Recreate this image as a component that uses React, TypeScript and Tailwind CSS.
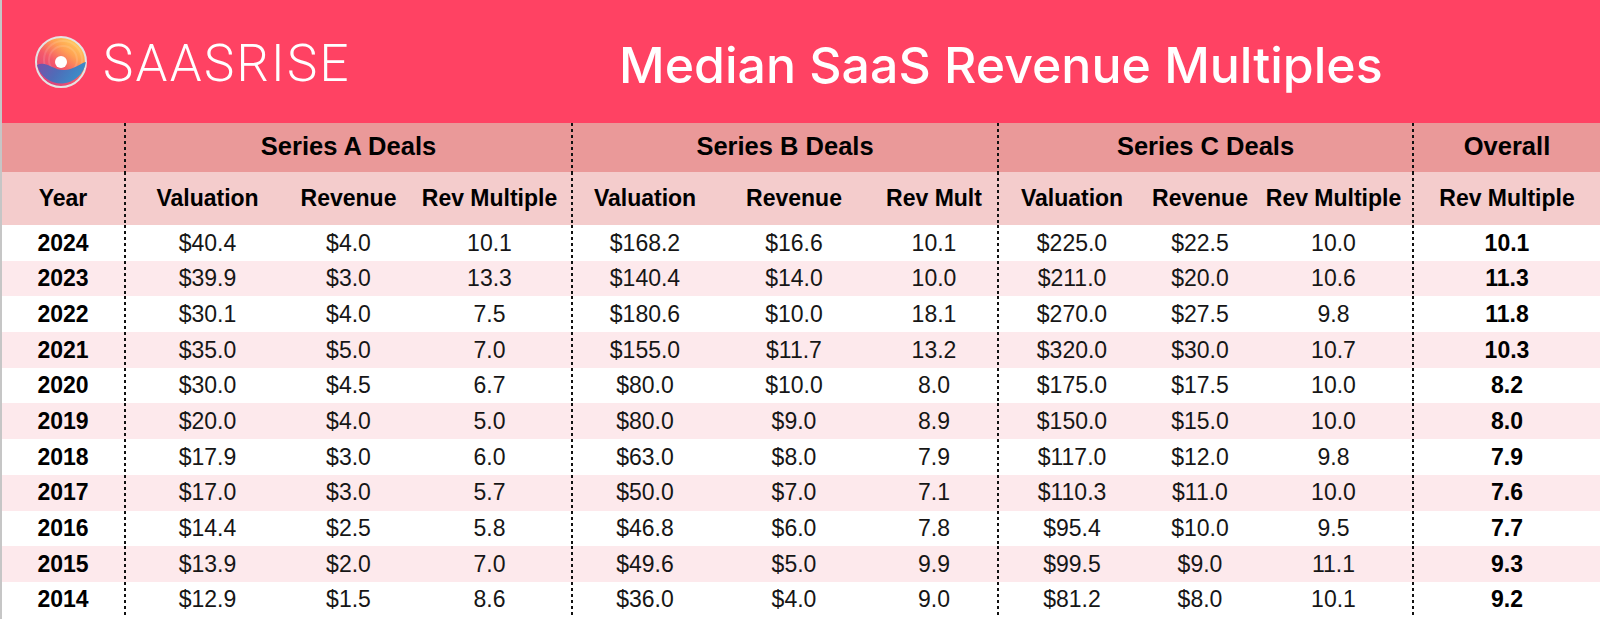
import React from "react"

const cols =
  "grid grid-cols-[122px_2px_163px_119px_163px_2px_144px_154px_126px_2px_146px_110px_157px_2px_1fr]"

const rows: [string, string[], string][] = [
  ["2024", ["$40.4", "$4.0", "10.1", "$168.2", "$16.6", "10.1", "$225.0", "$22.5", "10.0"], "10.1"],
  ["2023", ["$39.9", "$3.0", "13.3", "$140.4", "$14.0", "10.0", "$211.0", "$20.0", "10.6"], "11.3"],
  ["2022", ["$30.1", "$4.0", "7.5", "$180.6", "$10.0", "18.1", "$270.0", "$27.5", "9.8"], "11.8"],
  ["2021", ["$35.0", "$5.0", "7.0", "$155.0", "$11.7", "13.2", "$320.0", "$30.0", "10.7"], "10.3"],
  ["2020", ["$30.0", "$4.5", "6.7", "$80.0", "$10.0", "8.0", "$175.0", "$17.5", "10.0"], "8.2"],
  ["2019", ["$20.0", "$4.0", "5.0", "$80.0", "$9.0", "8.9", "$150.0", "$15.0", "10.0"], "8.0"],
  ["2018", ["$17.9", "$3.0", "6.0", "$63.0", "$8.0", "7.9", "$117.0", "$12.0", "9.8"], "7.9"],
  ["2017", ["$17.0", "$3.0", "5.7", "$50.0", "$7.0", "7.1", "$110.3", "$11.0", "10.0"], "7.6"],
  ["2016", ["$14.4", "$2.5", "5.8", "$46.8", "$6.0", "7.8", "$95.4", "$10.0", "9.5"], "7.7"],
  ["2015", ["$13.9", "$2.0", "7.0", "$49.6", "$5.0", "9.9", "$99.5", "$9.0", "11.1"], "9.3"],
  ["2014", ["$12.9", "$1.5", "8.6", "$36.0", "$4.0", "9.0", "$81.2", "$8.0", "10.1"], "9.2"],
]

function Sep() {
  return (
    <div className="h-full w-[2px] bg-[repeating-linear-gradient(to_bottom,#111_0px,#111_3px,transparent_3px,transparent_6px)]" />
  )
}

function Cell({ children, bold }: { children?: React.ReactNode; bold?: boolean }) {
  return (
    <div
      className={`flex items-center justify-center whitespace-nowrap ${
        bold ? "font-bold text-black" : "text-[#161616]"
      }`}
    >
      {children}
    </div>
  )
}

function Logo() {
  return (
    <svg width="54" height="54" viewBox="0 0 54 54">
      <defs>
        <linearGradient id="warm" x1="0.85" y1="0.05" x2="0.2" y2="0.9">
          <stop offset="0" stopColor="#ffd35e" />
          <stop offset="0.3" stopColor="#ffa253" />
          <stop offset="0.6" stopColor="#f55a6a" />
          <stop offset="1" stopColor="#d9407d" />
        </linearGradient>
        <linearGradient id="cool" x1="0" y1="0" x2="1" y2="0.3">
          <stop offset="0" stopColor="#7c4fa8" />
          <stop offset="0.5" stopColor="#4f6cb8" />
          <stop offset="1" stopColor="#3b8ec9" />
        </linearGradient>
      </defs>
      <circle cx="27" cy="27" r="25" fill="url(#warm)" stroke="#e4e4e4" strokeWidth="2" />
      <circle cx="29" cy="25" r="19" fill="none" stroke="#fff" strokeOpacity="0.12" strokeWidth="2" />
      <circle cx="29" cy="25" r="14" fill="none" stroke="#fff" strokeOpacity="0.12" strokeWidth="2" />
      <path
        d="M3 30 C 12 25 20 36 31 35 C 41 34 47 28 51.9 27 A 25 25 0 0 1 3 30 Z"
        fill="url(#cool)"
      />
      <circle cx="27" cy="27" r="6" fill="#fff" />
    </svg>
  )
}

export default function App() {
  return (
    <div className="w-[1600px] h-[619px] overflow-hidden bg-white border-l-2 border-[#c6c6c6] font-['Liberation_Sans',Arial,sans-serif]">
      {/* banner */}
      <div className="h-[123px] bg-[#ff4263] flex items-center">
        <div className="w-[617px] shrink-0 flex items-center pl-[32px] pt-[1px]">
          <Logo />
          <span className="ml-[15px] text-white text-[51px] leading-none tracking-[2.3px] font-light font-['Roboto',sans-serif] pt-[3px]">
            SAASRISE
          </span>
        </div>
        <h1 className="text-white text-[50px] leading-none font-medium font-['Inter',sans-serif] pt-[7px]">
          Median SaaS Revenue Multiples
        </h1>
      </div>

      {/* series header */}
      <div className={`${cols} h-[49px] bg-[#ea9999] text-[25.5px] font-bold text-black`}>
        <div />
        <Sep />
        <div className="col-span-3 flex items-center justify-center pb-[3px]">Series A Deals</div>
        <Sep />
        <div className="col-span-3 flex items-center justify-center pb-[3px]">Series B Deals</div>
        <Sep />
        <div className="col-span-3 flex items-center justify-center pb-[3px]">Series C Deals</div>
        <Sep />
        <div className="flex items-center justify-center pb-[3px]">Overall</div>
      </div>

      {/* column header */}
      <div className={`${cols} h-[53px] bg-[#f4cccc] text-[23px]`}>
        <Cell bold>Year</Cell>
        <Sep />
        <Cell bold>Valuation</Cell>
        <Cell bold>Revenue</Cell>
        <Cell bold>Rev Multiple</Cell>
        <Sep />
        <Cell bold>Valuation</Cell>
        <Cell bold>Revenue</Cell>
        <Cell bold>Rev Mult</Cell>
        <Sep />
        <Cell bold>Valuation</Cell>
        <Cell bold>Revenue</Cell>
        <Cell bold>Rev Multiple</Cell>
        <Sep />
        <Cell bold>Rev Multiple</Cell>
      </div>

      {/* data */}
      {rows.map(([year, vals, overall], i) => (
        <div
          key={year}
          className={`${cols} h-[35.7px] text-[23px] ${i % 2 === 1 ? "bg-[#fde9ec]" : "bg-white"}`}
        >
          <Cell bold>{year}</Cell>
          <Sep />
          <Cell>{vals[0]}</Cell>
          <Cell>{vals[1]}</Cell>
          <Cell>{vals[2]}</Cell>
          <Sep />
          <Cell>{vals[3]}</Cell>
          <Cell>{vals[4]}</Cell>
          <Cell>{vals[5]}</Cell>
          <Sep />
          <Cell>{vals[6]}</Cell>
          <Cell>{vals[7]}</Cell>
          <Cell>{vals[8]}</Cell>
          <Sep />
          <Cell bold>{overall}</Cell>
        </div>
      ))}
    </div>
  )
}
